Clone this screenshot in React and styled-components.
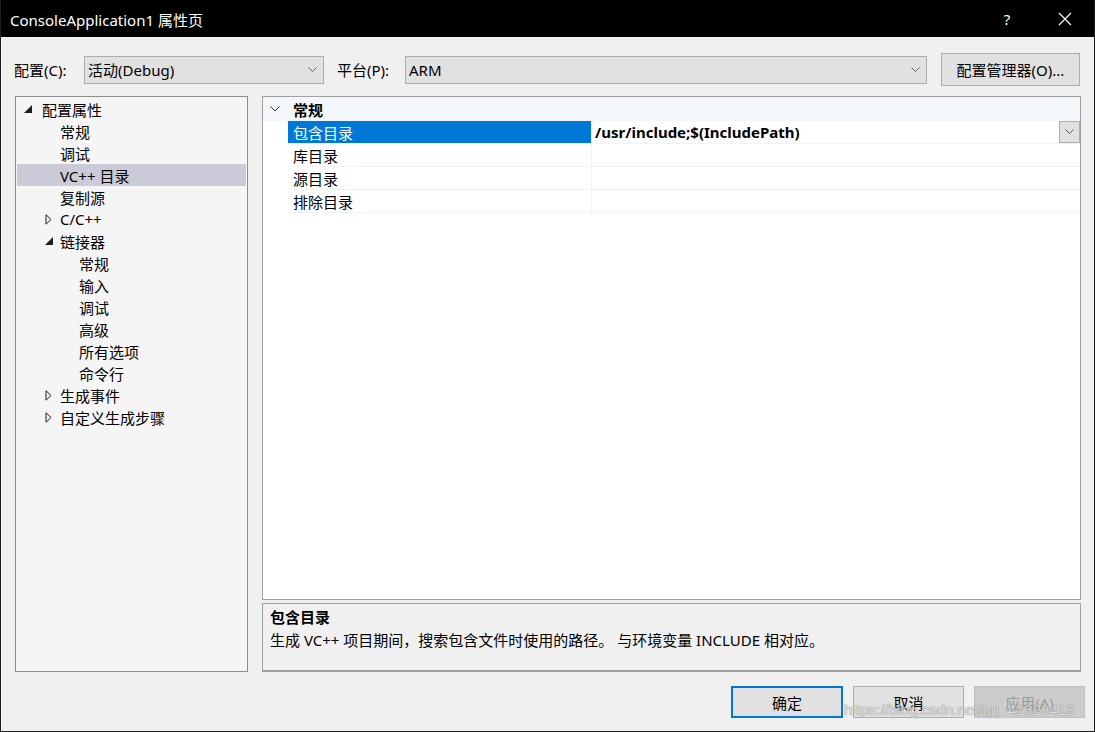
import React from "react";
import styled, { createGlobalStyle } from "styled-components";

const Global = createGlobalStyle`
  html, body { margin: 0; padding: 0; background: #f0f0f0; }
  * { box-sizing: border-box; }
`;

const FONT = `"Noto Sans", "Noto Sans CJK SC", sans-serif`;

const Window = styled.div`
  position: relative;
  width: 1095px;
  height: 732px;
  display: flex;
  flex-direction: column;
  background: #f0f0f0;
  border: 1px solid #1f1f1f;
  border-top: none;
  font-family: ${FONT};
  font-size: 15px;
  color: #000;
  overflow: hidden;
`;

const TitleBar = styled.div`
  height: 37px;
  flex: none;
  background: #000;
  color: #fff;
  display: flex;
  align-items: center;
  padding-left: 9px;
  font-size: 15px;
`;

const TitleText = styled.div`
  flex: 1;
  margin-top: 1px;
`;

const TitleBtn = styled.div`
  width: ${(p) => p.$w}px;
  height: 37px;
  display: flex;
  align-items: center;
  justify-content: center;
  color: #fff;
  font-size: 15px;
`;

const ConfigRow = styled.div`
  display: flex;
  align-items: center;
  height: 33px;
  margin: 16px 14px 0 13px;
  flex: none;
`;

const Label = styled.span`
  width: ${(p) => p.$w}px;
  padding-left: ${(p) => p.$pl || 0}px;
  white-space: nowrap;
  flex: none;
`;

const Select = styled.div`
  width: ${(p) => p.$w}px;
  height: 28px;
  background: #e1e1e1;
  border: 1px solid #adadad;
  display: flex;
  align-items: center;
  padding: 0 6px 0 3px;
  justify-content: space-between;
  flex: none;
`;

const Button = styled.div`
  width: ${(p) => p.$w}px;
  height: ${(p) => p.$h || 32}px;
  background: ${(p) => (p.$disabled ? "#cccccc" : "#e1e1e1")};
  color: ${(p) => (p.$disabled ? "#9a9a9a" : "#000")};
  border: ${(p) => (p.$primary ? "2px solid #0078d7" : p.$disabled ? "1px solid #bfbfbf" : "1px solid #adadad")};
  display: flex;
  align-items: center;
  justify-content: center;
  margin-left: ${(p) => p.$ml || 0}px;
  white-space: nowrap;
  flex: none;
`;

const Main = styled.div`
  display: flex;
  margin: 10px 13px 0 14px;
  height: 576px;
  flex: none;
`;

const Tree = styled.div`
  width: 233px;
  background: #f5f5f5;
  border: 1px solid #8c8c8c;
  padding: 1px;
  display: flex;
  flex-direction: column;
`;

const TreeRow = styled.div`
  height: 22px;
  display: flex;
  align-items: center;
  padding-left: ${(p) => p.$indent}px;
  background: ${(p) => (p.$selected ? "#cacbd6" : "transparent")};
  white-space: nowrap;
`;

const Toggle = styled.span`
  width: ${(p) => p.$w}px;
  display: inline-flex;
  align-items: center;
  flex: none;
`;

const Right = styled.div`
  flex: 1;
  margin-left: 14px;
  display: flex;
  flex-direction: column;
`;

const Grid = styled.div`
  height: 504px;
  background: #fff;
  border: 1px solid #a0a0a0;
  display: flex;
  flex-direction: column;
`;

const CatRow = styled.div`
  height: 24px;
  background: #f3f6fb;
  display: flex;
  align-items: center;
  font-weight: 700;
`;

const CatIcon = styled.span`
  width: 30px;
  padding-left: 7px;
  display: inline-flex;
  align-items: center;
`;

const PropRow = styled.div`
  height: 23px;
  display: flex;
  margin-left: 25px;
  border-bottom: 1px solid #eff2f7;
`;

const PropName = styled.div`
  width: 304px;
  padding-left: 5px;
  display: flex;
  align-items: center;
  background: ${(p) => (p.$selected ? "#0078d7" : "#fff")};
  color: ${(p) => (p.$selected ? "#fff" : "#000")};
  border-right: 1px solid #eff2f7;
`;

const PropValue = styled.div`
  flex: 1;
  display: flex;
  align-items: center;
  padding-left: 3px;
  font-weight: 700;
  justify-content: space-between;
`;

const DropBtn = styled.div`
  width: 21px;
  height: 22px;
  background: #e1e1e1;
  border: 1px solid #adadad;
  display: flex;
  align-items: center;
  justify-content: center;
`;

const Desc = styled.div`
  margin-top: 3px;
  height: 69px;
  border: 1px solid #a0a0a0;
  border-bottom: 2px solid #a0a0a0;
  background: #f0f0f0;
  padding: 1px 7px;
  display: flex;
  flex-direction: column;
`;

const DescTitle = styled.div`
  font-weight: 700;
  height: 22px;
  display: flex;
  align-items: center;
`;

const DescText = styled.div`
  height: 24px;
  display: flex;
  align-items: center;
`;

const Footer = styled.div`
  display: flex;
  justify-content: flex-end;
  margin: 14px 9px 0 0;
`;

const Watermark = styled.div`
  position: absolute;
  left: 843px;
  top: 701px;
  font-family: "Liberation Sans", Arial, sans-serif;
  font-size: 15px;
  white-space: nowrap;
  color: rgba(255, 255, 255, 0.75);
  text-shadow: 0 0 1px rgba(60, 60, 60, 0.55), 0 0 1px rgba(60, 60, 60, 0.4);
  pointer-events: none;
`;

const Chevron = ({ size = 10, color = "#555" }) => (
  <svg width={size} height={size * 0.6} viewBox="0 0 10 6">
    <path d="M0.5 0.5 L5 5 L9.5 0.5" fill="none" stroke={color} strokeWidth="1" />
  </svg>
);

const Expanded = () => (
  <svg width="8" height="8" viewBox="0 0 8 8">
    <path d="M8 0 L8 8 L0 8 Z" fill="#1e1e1e" />
  </svg>
);

const Collapsed = () => (
  <svg width="7" height="11" viewBox="0 0 7 11">
    <path d="M1 0.8 L6 5.5 L1 10.2 Z" fill="none" stroke="#1e1e1e" strokeWidth="1" />
  </svg>
);

const tree = [
  { label: "配置属性", level: 0, toggle: "open" },
  { label: "常规", level: 1 },
  { label: "调试", level: 1 },
  { label: "VC++ 目录", level: 1, selected: true },
  { label: "复制源", level: 1 },
  { label: "C/C++", level: 1, toggle: "closed" },
  { label: "链接器", level: 1, toggle: "open" },
  { label: "常规", level: 2 },
  { label: "输入", level: 2 },
  { label: "调试", level: 2 },
  { label: "高级", level: 2 },
  { label: "所有选项", level: 2 },
  { label: "命令行", level: 2 },
  { label: "生成事件", level: 1, toggle: "closed" },
  { label: "自定义生成步骤", level: 1, toggle: "closed" },
];

const indentFor = (n) => {
  if (n.level === 0) return 7;
  if (n.level === 1) return n.toggle ? 28 : 43;
  return 62;
};

const props = [
  { name: "包含目录", value: "/usr/include;$(IncludePath)", selected: true },
  { name: "库目录" },
  { name: "源目录" },
  { name: "排除目录" },
];

export default function App() {
  return (
    <>
      <Global />
      <Window>
        <TitleBar>
          <TitleText>ConsoleApplication1 属性页</TitleText>
          <TitleBtn $w={58}>?</TitleBtn>
          <TitleBtn $w={58}>
            <svg width="14" height="14" viewBox="0 0 14 14">
              <path d="M1 1 L13 13 M13 1 L1 13" stroke="#fff" strokeWidth="1.2" />
            </svg>
          </TitleBtn>
        </TitleBar>

        <ConfigRow>
          <Label $w={70}>配置(C):</Label>
          <Select $w={240}>
            <span>活动(Debug)</span>
            <Chevron size={9} />
          </Select>
          <Label $w={81} $pl={13}>平台(P):</Label>
          <Select $w={522}>
            <span>ARM</span>
            <Chevron size={9} />
          </Select>
          <Button $w={139} $h={33} $ml={14}>配置管理器(O)...</Button>
        </ConfigRow>

        <Main>
          <Tree>
            {tree.map((n, i) => (
              <TreeRow key={i} $indent={indentFor(n)} $selected={n.selected}>
                {n.toggle && (
                  <Toggle $w={n.level === 0 ? 18 : 15}>
                    {n.toggle === "open" ? <Expanded /> : <Collapsed />}
                  </Toggle>
                )}
                {n.label}
              </TreeRow>
            ))}
          </Tree>

          <Right>
            <Grid>
              <CatRow>
                <CatIcon>
                  <Chevron size={10} color="#333" />
                </CatIcon>
                常规
              </CatRow>
              {props.map((p, i) => (
                <PropRow key={i}>
                  <PropName $selected={p.selected}>{p.name}</PropName>
                  <PropValue>
                    <span>{p.value || ""}</span>
                    {p.selected && (
                      <DropBtn>
                        <Chevron size={9} color="#444" />
                      </DropBtn>
                    )}
                  </PropValue>
                </PropRow>
              ))}
            </Grid>
            <Desc>
              <DescTitle>包含目录</DescTitle>
              <DescText>生成 VC++ 项目期间，搜索包含文件时使用的路径。 与环境变量 INCLUDE 相对应。</DescText>
            </Desc>
          </Right>
        </Main>

        <Footer>
          <Button $w={112} $primary>确定</Button>
          <Button $w={111} $ml={10}>取消</Button>
          <Button $w={111} $ml={10} $disabled>应用(A)</Button>
        </Footer>
        <Watermark>https://blog.csdn.net/qq_42329413</Watermark>
      </Window>
    </>
  );
}
